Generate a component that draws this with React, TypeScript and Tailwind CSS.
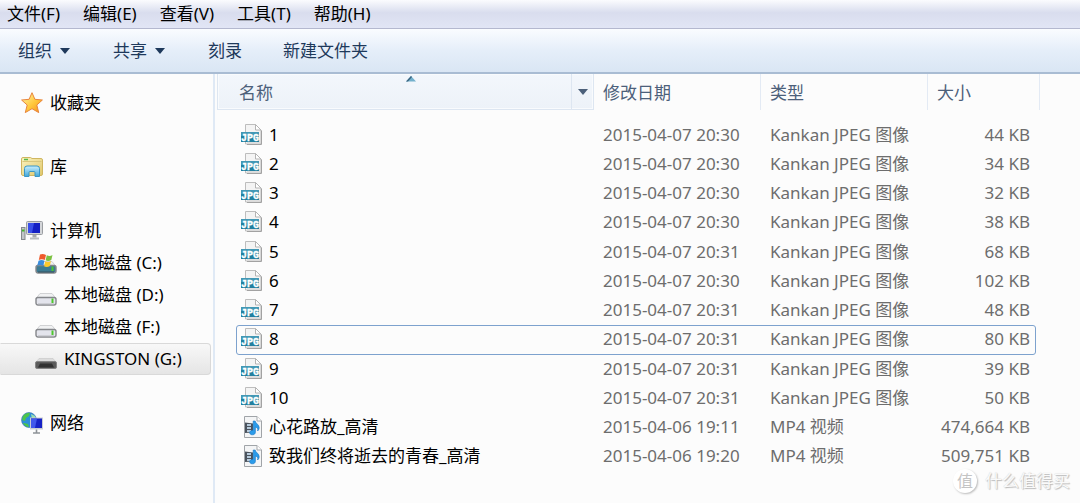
import type { ReactNode } from "react";

type FileRow = {
  name: string;
  date: string;
  type: string;
  size: string;
  kind: "jpg" | "video";
  focused?: boolean;
};

const jpg = (name: string, time: string, size: string, focused = false): FileRow => ({
  name,
  date: `2015-04-07 ${time}`,
  type: "Kankan JPEG 图像",
  size,
  kind: "jpg",
  focused,
});

const files: FileRow[] = [
  jpg("1", "20:30", "44 KB"),
  jpg("2", "20:30", "34 KB"),
  jpg("3", "20:30", "32 KB"),
  jpg("4", "20:30", "38 KB"),
  jpg("5", "20:31", "68 KB"),
  jpg("6", "20:30", "102 KB"),
  jpg("7", "20:31", "48 KB"),
  jpg("8", "20:31", "80 KB", true),
  jpg("9", "20:31", "39 KB"),
  jpg("10", "20:31", "50 KB"),
  { name: "心花路放_高清", date: "2015-04-06 19:11", type: "MP4 视频", size: "474,664 KB", kind: "video" },
  { name: "致我们终将逝去的青春_高清", date: "2015-04-06 19:20", type: "MP4 视频", size: "509,751 KB", kind: "video" },
];

const menus = ["文件(F)", "编辑(E)", "查看(V)", "工具(T)", "帮助(H)"];

function JpgIcon() {
  return (
    <svg width="22" height="24" viewBox="0 0 22 24" aria-hidden="true" className="shrink-0">
      <path d="M4.500 1.500h10l5.500 5.500v14H4.500z" fill="#f4f4f4" stroke="#bdbdbd" />
      <path d="M6 17h13v3.500H6z" fill="#dedede" />
      <path d="M14.500 1.500V7h5.500z" fill="#fff" stroke="#b4b4b4" />
      <path d="M20.500 7.500v14H6" fill="none" stroke="#a2a2a2" />
      <rect x="0" y="9" width="18" height="10" fill="#22809f" />
      <rect x="0" y="9" width="18" height="4" fill="#4298b5" />
      <text x="9" y="17.500" textAnchor="middle" fontSize="10" fontWeight="700" fontFamily="Liberation Mono, monospace" fill="#fff" stroke="#fff" strokeWidth=".3">
        JPG
      </text>
    </svg>
  );
}

function VideoIcon() {
  return (
    <svg width="22" height="24" viewBox="0 0 22 24" aria-hidden="true" className="shrink-0">
      <path d="M3.500 1.500h12.500l4.500 4.500v16.500h-17z" fill="#f4f5f6" stroke="#a0a4a8" />
      <path d="M16 1.500V6h4.500" fill="#fff" stroke="#a5a8ac" />
      <path d="M4 7.500l8 1v9l-8 .5z" fill="#4b535d" />
      <path d="M6 9h4v2H6zM6 12h4v2H6zM6 15h4v2H6z" fill="#b7cbdc" />
      <path d="M12.200 6h2c.2 2.500 4.300 3.500 4 7-.1 1.300-.8 2.200-1.600 3 .7-2.300-.6-3.500-2.200-4v5.200c0 1.700-1.500 2.600-3 2.600-1.700 0-2.700-.9-2.700-2.100 0-1.500 1.700-2.600 3.500-2.300z" fill="#2b9cea" stroke="#1976c5" strokeWidth=".6" />
    </svg>
  );
}

function StarIcon() {
  return (
    <svg width="22" height="22" viewBox="0 0 22 22" aria-hidden="true">
      <defs>
        <linearGradient id="star" x1="0" y1="0" x2="1" y2="1">
          <stop offset="0" stopColor="#fff6b0" />
          <stop offset=".55" stopColor="#ffc83a" />
          <stop offset="1" stopColor="#f58a1b" />
        </linearGradient>
      </defs>
      <path d="M11 .700l2.900 6.600 7.500.7-5.600 5 1.900 7.600L11 16.700l-6.700 3.900 1.900-7.600L.600 8l7.500-.7z" fill="url(#star)" stroke="#e8853c" strokeLinejoin="round" />
    </svg>
  );
}

function LibraryIcon() {
  return (
    <svg width="22" height="22" viewBox="0 0 22 22" aria-hidden="true">
      <defs>
        <linearGradient id="folder" x1="0" y1="0" x2="1" y2="1">
          <stop offset="0" stopColor="#fbf3c0" />
          <stop offset="1" stopColor="#e0c76a" />
        </linearGradient>
        <linearGradient id="stand" x1="0" y1="0" x2="0" y2="1">
          <stop offset="0" stopColor="#c9efff" />
          <stop offset="1" stopColor="#3fa6d8" />
        </linearGradient>
      </defs>
      <path d="M.500 3q0-1.500 1.500-1.500h7.500l1.500 1h9q1.500 0 1.500 1.500v14q0 1.500-1.500 1.500H2q-1.500 0-1.500-1.500z" fill="url(#folder)" stroke="#cfb661" />
      <path d="M3 3.500h4" stroke="#54b948" strokeWidth="1.500" />
      <path d="M1.500 5.500h19" stroke="#d9c67c" />
      <path d="M3.500 20.500v-8q0-2.500 2.500-2.500h10q2.500 0 2.500 2.500v8h-4.500v-4q0-1-1-1H9q-1 0-1 1v4z" fill="url(#stand)" stroke="#3b97c6" />
    </svg>
  );
}

function Screen() {
  return (
    <>
      <rect x="5.500" y="1.500" width="16" height="13" rx="1" fill="#d4d6d9" stroke="#9b9ea2" />
      <rect x="7" y="3" width="12" height="10" fill="#1420c4" />
      <path d="M7 3h6l-2 10H7z" fill="#3a50e8" />
      <path d="M11.500 15h4v2.500h-4z" fill="#a6a9ad" />
      <path d="M9 18.500h9" stroke="#b9bcc0" strokeWidth="2" />
    </>
  );
}

function ComputerIcon() {
  return (
    <svg width="22" height="22" viewBox="0 0 22 22" aria-hidden="true">
      <Screen />
      <rect x=".5" y="7.500" width="3.500" height="12" fill="#c2c5c8" stroke="#85898d" />
      <path d="M1 10.500h2.500" stroke="#45b52e" strokeWidth="2" />
    </svg>
  );
}

function NetworkIcon() {
  return (
    <svg width="22" height="22" viewBox="0 0 22 22" aria-hidden="true">
      <circle cx="8" cy="8" r="7.500" fill="#2d8fd8" stroke="#3a6fae" strokeWidth=".6" />
      <path d="M2 4c2-3 5-3.500 7-3.300L8 4 5 6 4 9 1 8zM3 11l4 1 1 3C5 15 3 13 2 11z" fill="#4cc44a" />
      <path d="M10 2l4 2 1 4-4-1z" fill="#9adfb0" />
      <rect x="9" y="5.500" width="13" height="12" fill="#c9ccd1" />
      <rect x="10" y="6.500" width="11" height="9.500" fill="#1722c6" />
      <path d="M10 6.500h6l-2 9.500h-4z" fill="#4157ec" />
      <path d="M15.500 17.500v3M12 21h7" stroke="#8d9297" strokeWidth="1.600" />
    </svg>
  );
}

function DriveIcon({ tone = "light" }: { tone?: "light" | "dark" | "system" }) {
  if (tone === "dark") {
    return (
      <svg width="22" height="22" viewBox="0 0 22 22" aria-hidden="true">
        <path d="M4 8.500h14l3.500 4.500H.500z" fill="#dcdcdc" stroke="#c5c5c5" strokeWidth=".6" />
        <path d="M.500 13q0-1.500 1.500-1.500h18q1.500 0 1.500 1.500v4q0 1.500-1.500 1.500H2Q.500 18.500.500 17z" fill="#5b5b5b" stroke="#858585" />
        <path d="M3 17.500l2-4h12l2 4z" fill="#323232" />
      </svg>
    );
  }
  const system = tone === "system";
  return (
    <svg width="22" height="22" viewBox="0 0 22 22" aria-hidden="true">
      <path d="M5 7.500h12l4 5H1z" fill="#f1f2f3" stroke="#c7c8ca" strokeWidth=".8" />
      <rect x="1" y="11.500" width="20" height="7.500" rx="2" fill={system ? "#3c7b92" : "#e3e4ec"} stroke="#85878b" strokeWidth="1.400" />
      <path d="M3 18h16" stroke={system ? "#37515c" : "#b6b8bd"} />
      <path d="M17.500 12.500v4.500" stroke="#4cc72d" strokeWidth="2" />
      {system && (
        <>
          <path d="M5 .500q3-1 6 .500l-1.200 5q-3-1.500-6 0z" fill="#ee5a2c" />
          <path d="M11.800 1.300q3 1.500 5.700-.3l-1.200 5q-3 1.700-5.700.300z" fill="#7cc142" />
          <path d="M3.500 6.800q3-1.500 6 0l-1.200 5q-3-1.500-6 0z" fill="#3a8ddd" />
          <path d="M10.300 7.200q3 1.500 5.700-.2l-1.200 5q-3 1.700-5.700.2z" fill="#fcc92c" />
        </>
      )}
    </svg>
  );
}

function Caret() {
  return (
    <svg width="10" height="6" viewBox="0 0 10 6" aria-hidden="true">
      <path d="M0 0h10L5 6z" fill="currentColor" />
    </svg>
  );
}

function NavItem({ icon, label, nested, selected }: { icon: ReactNode; label: string; nested?: boolean; selected?: boolean }) {
  return (
    <a
      href="#"
      aria-current={selected ? "page" : undefined}
      className={`flex h-8 items-center gap-[7px] border ${nested ? "pl-[34px]" : "pl-5"} ${
        selected
          ? "mr-0.5 rounded-r border-[#d9d9d9] border-l-transparent bg-linear-to-b from-[#f8f8f8] to-[#e5e5e5]"
          : "border-transparent"
      }`}
    >
      <span className={nested ? "pt-1" : ""}>{icon}</span>
      <span>{label}</span>
    </a>
  );
}

function HeaderCell({ label, width }: { label: string; width: string }) {
  return (
    <th scope="col" className={`h-[46px] p-0 align-top font-normal ${width}`}>
      <div className="flex h-9 items-center border-r border-[#e3eaf4] pt-0.5 pl-[9px]">{label}</div>
    </th>
  );
}

export default function App() {
  return (
    <div className="flex min-h-screen flex-col bg-[#fcfcfc] font-['Noto_Sans','Noto_Sans_CJK_SC',sans-serif] text-[17px] leading-6 text-black">
      <nav className="flex h-[29px] items-center gap-[23px] border-b border-[#b4b8cf] bg-linear-to-b from-[#fbfcfe] via-[#d9ddee] via-45% to-[#e1e5f5] pl-[7px]">
        {menus.map((m) => (
          <button key={m} type="button">{m}</button>
        ))}
      </nav>

      <div className="flex h-[45px] items-center border-b-2 border-[#a9bcd3] bg-linear-to-b from-[#fafcff] via-[#e5eef9] via-50% to-[#dae6f4] pl-[18px] text-[#1e395b]">
        <button type="button" className="mr-[43px] flex items-center gap-2">组织 <Caret /></button>
        <button type="button" className="mr-[43px] flex items-center gap-2">共享 <Caret /></button>
        <button type="button" className="mr-[41px]">刻录</button>
        <button type="button">新建文件夹</button>
      </div>

      <div className="flex flex-1">
        <aside className="flex w-[215px] shrink-0 flex-col gap-8 border-r-2 border-[#dfe9f5] pt-[13px]">
          <NavItem icon={<StarIcon />} label="收藏夹" />
          <NavItem icon={<LibraryIcon />} label="库" />
          <div>
            <NavItem icon={<ComputerIcon />} label="计算机" />
            <NavItem nested icon={<DriveIcon tone="system" />} label="本地磁盘 (C:)" />
            <NavItem nested icon={<DriveIcon />} label="本地磁盘 (D:)" />
            <NavItem nested icon={<DriveIcon />} label="本地磁盘 (F:)" />
            <NavItem nested selected icon={<DriveIcon tone="dark" />} label="KINGSTON (G:)" />
          </div>
          <NavItem icon={<NetworkIcon />} label="网络" />
        </aside>

        <main className="relative flex-1 pr-10 pl-0.5">
          <table className="h-[397px] w-full table-fixed border-collapse text-left">
            <thead className="text-[#4c607a]">
              <tr>
                <th scope="col" className="h-[46px] p-0 align-top font-normal">
                  <div className="relative flex h-9 items-stretch border border-t-0 border-[#dde6f1] bg-linear-to-b from-[#f3f7fc] to-[#edf2f8] inset-ring inset-ring-[#f9fbfd]">
                    <span className="flex flex-1 items-center pt-0.5 pl-[21px]">名称</span>
                    <button type="button" aria-label="筛选名称" className="flex w-[22px] items-center justify-center border-l border-[#dde6f1]">
                      <Caret />
                    </button>
                    <svg width="10" height="6" viewBox="0 0 10 6" aria-hidden="true" className="absolute top-0.5 left-1/2">
                      <path d="M5 0l5 5.500H0z" fill="#72b0cc" />
                      <path d="M5 0L0 5.500h2L6 1z" fill="#3b647f" />
                    </svg>
                  </div>
                </th>
                <HeaderCell label="修改日期" width="w-[167px]" />
                <HeaderCell label="类型" width="w-[167px]" />
                <HeaderCell label="大小" width="w-28" />
              </tr>
            </thead>
            <tbody className="text-[#6d6d6d]">
              {files.map((f) => (
                <tr key={f.name} className="relative">
                  <td className="p-0 pl-6 text-black">
                    <div className="flex items-center gap-1.5">
                      {f.kind === "jpg" ? <JpgIcon /> : <VideoIcon />}
                      <span>{f.name}</span>
                    </div>
                    {f.focused && (
                      <span className="absolute top-0 right-1 -bottom-px left-[19px] rounded-[3px] border border-solid border-[#7da2ce]" />
                    )}
                  </td>
                  <td className="p-0 pl-[9px] whitespace-nowrap">{f.date}</td>
                  <td className="p-0 pl-[9px] whitespace-nowrap">{f.type}</td>
                  <td className="p-0 pr-2.5 text-right whitespace-nowrap">{f.size}</td>
                </tr>
              ))}
            </tbody>
          </table>

          <div className="absolute right-2.5 bottom-2.5 flex items-center gap-2 text-[#fafafa] [text-shadow:1px_1px_1px_#bbb,0_0_1px_#ccc]">
            <span className="flex size-6 items-center justify-center rounded-full bg-white text-base text-[#c4c4c4] shadow-[1px_1px_2px_#bbb] [text-shadow:none]">值</span>
            <span>什么值得买</span>
          </div>
        </main>
      </div>
    </div>
  );
}
